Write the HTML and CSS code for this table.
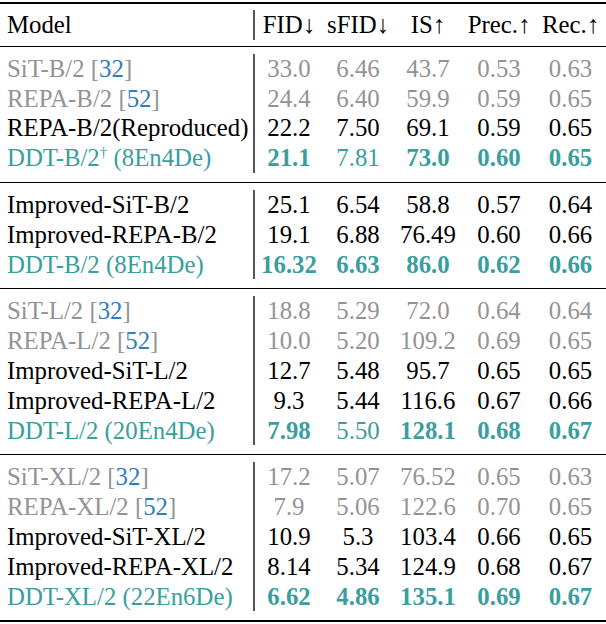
FILE: index.html
```html
<!DOCTYPE html>
<html>
<head>
<meta charset="utf-8">
<link rel="stylesheet" href="styles.css">
</head>
<body>
<div class="table">
  <div class="section head">
    <div class="row">
      <div class="name">Model</div><div>FID↓</div><div>sFID↓</div><div>IS↑</div><div>Prec.↑</div><div>Rec.↑</div>
    </div>
  </div>
  <div class="section">
    <div class="row gray"><div class="name">SiT-B/2 [<span class="cite">32</span>]</div><div>33.0</div><div>6.46</div><div>43.7</div><div>0.53</div><div>0.63</div></div>
    <div class="row gray"><div class="name">REPA-B/2 [<span class="cite">52</span>]</div><div>24.4</div><div>6.40</div><div>59.9</div><div>0.59</div><div>0.65</div></div>
    <div class="row"><div class="name">REPA-B/2(Reproduced)</div><div>22.2</div><div>7.50</div><div>69.1</div><div>0.59</div><div>0.65</div></div>
    <div class="row teal"><div class="name">DDT-B/2<sup>†</sup> (8En4De)</div><div class="b">21.1</div><div>7.81</div><div class="b">73.0</div><div class="b">0.60</div><div class="b">0.65</div></div>
  </div>
  <div class="section">
    <div class="row"><div class="name">Improved-SiT-B/2</div><div>25.1</div><div>6.54</div><div>58.8</div><div>0.57</div><div>0.64</div></div>
    <div class="row"><div class="name">Improved-REPA-B/2</div><div>19.1</div><div>6.88</div><div>76.49</div><div>0.60</div><div>0.66</div></div>
    <div class="row teal"><div class="name">DDT-B/2 (8En4De)</div><div class="b">16.32</div><div class="b">6.63</div><div class="b">86.0</div><div class="b">0.62</div><div class="b">0.66</div></div>
  </div>
  <div class="section">
    <div class="row gray"><div class="name">SiT-L/2 [<span class="cite">32</span>]</div><div>18.8</div><div>5.29</div><div>72.0</div><div>0.64</div><div>0.64</div></div>
    <div class="row gray"><div class="name">REPA-L/2 [<span class="cite">52</span>]</div><div>10.0</div><div>5.20</div><div>109.2</div><div>0.69</div><div>0.65</div></div>
    <div class="row"><div class="name">Improved-SiT-L/2</div><div>12.7</div><div>5.48</div><div>95.7</div><div>0.65</div><div>0.65</div></div>
    <div class="row"><div class="name">Improved-REPA-L/2</div><div>9.3</div><div>5.44</div><div>116.6</div><div>0.67</div><div>0.66</div></div>
    <div class="row teal"><div class="name">DDT-L/2 (20En4De)</div><div class="b">7.98</div><div>5.50</div><div class="b">128.1</div><div class="b">0.68</div><div class="b">0.67</div></div>
  </div>
  <div class="section">
    <div class="row gray"><div class="name">SiT-XL/2 [<span class="cite">32</span>]</div><div>17.2</div><div>5.07</div><div>76.52</div><div>0.65</div><div>0.63</div></div>
    <div class="row gray"><div class="name">REPA-XL/2 [<span class="cite">52</span>]</div><div>7.9</div><div>5.06</div><div>122.6</div><div>0.70</div><div>0.65</div></div>
    <div class="row"><div class="name">Improved-SiT-XL/2</div><div>10.9</div><div>5.3</div><div>103.4</div><div>0.66</div><div>0.65</div></div>
    <div class="row"><div class="name">Improved-REPA-XL/2</div><div>8.14</div><div>5.34</div><div>124.9</div><div>0.68</div><div>0.67</div></div>
    <div class="row teal"><div class="name">DDT-XL/2 (22En6De)</div><div class="b">6.62</div><div class="b">4.86</div><div class="b">135.1</div><div class="b">0.69</div><div class="b">0.67</div></div>
  </div>
</div>
</body>
</html>
```

FILE: styles.css
```css
body {
  margin: 0;
  background: #ffffff;
  font-family: "Liberation Serif", Tinos, "Times New Roman", serif;
  font-size: 24.8px;
  color: #000000;
}

.table {
  width: 606px;
  margin-top: 2px;
  border-top: 2px solid #000000;
  border-bottom: 2px solid #000000;
}

.section {
  padding: 7px 0 9px;
  border-top: 1px solid #000000;
}

.section.head {
  padding: 6px 0 6px;
  border-top: none;
}

.row {
  display: grid;
  grid-template-columns: 255px 68px 70px 70px 72px 71px;
  line-height: 29.8px;
  text-align: center;
  white-space: nowrap;
}

.row .name {
  text-align: left;
  padding-left: 7px;
  border-right: 2px solid #555555;
}

.gray {
  color: #939393;
}

.teal {
  color: #3a9e9e;
}

.cite {
  color: #2f7dc0;
}

.b {
  font-weight: bold;
}

sup {
  font-size: 15px;
  line-height: 0;
  vertical-align: 9px;
}
```
